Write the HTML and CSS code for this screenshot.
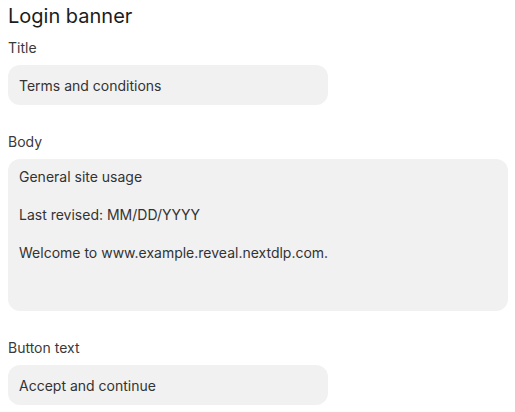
FILE: index.html
```html
<!DOCTYPE html>
<html>
<head>
<meta charset="utf-8">
<link rel="stylesheet" href="styles.css">
</head>
<body>
<main class="panel">
  <h2 class="panel-title">Login banner</h2>
  <div class="field">
    <label class="field-label" for="title">Title</label>
    <input class="field-input" id="title" type="text" value="Terms and conditions">
  </div>
  <div class="field">
    <label class="field-label" for="body">Body</label>
    <textarea class="field-textarea" id="body">General site usage

Last revised: MM/DD/YYYY

Welcome to www.example.reveal.nextdlp.com.</textarea>
  </div>
  <div class="field">
    <label class="field-label" for="button">Button text</label>
    <input class="field-input" id="button" type="text" value="Accept and continue">
  </div>
</main>
</body>
</html>
```
FILE: styles.css
```css
* { box-sizing: border-box; }
html, body {
  margin: 0;
  padding: 0;
  background: #ffffff;
}
body {
  font-family: Inter, "Noto Sans", sans-serif;
  color: #333333;
}
.panel {
  display: flex;
  flex-direction: column;
  gap: 27px;
  padding: 4px 8px 0 8px;
}
.panel-title {
  margin: 0 0 -17px 0;
  font-size: 20px;
  line-height: 24px;
  font-weight: 400;
  color: #1c1c1c;
}
.field {
  display: flex;
  flex-direction: column;
  gap: 7px;
}
.field-label {
  font-size: 14px;
  line-height: 20px;
  color: #3a3a3a;
}
.field-input,
.field-textarea {
  font-family: Inter, "Noto Sans", sans-serif;
  font-size: 14px;
  color: #333333;
  background: #f1f1f1;
  border: none;
  border-radius: 12px;
  outline: none;
  margin: 0;
}
.field-input {
  width: 320px;
  height: 40px;
  padding: 0 11px;
}
.field-textarea {
  width: 500px;
  height: 152px;
  padding: 8px 11px;
  line-height: 19px;
  resize: none;
  overflow: hidden;
}
```
